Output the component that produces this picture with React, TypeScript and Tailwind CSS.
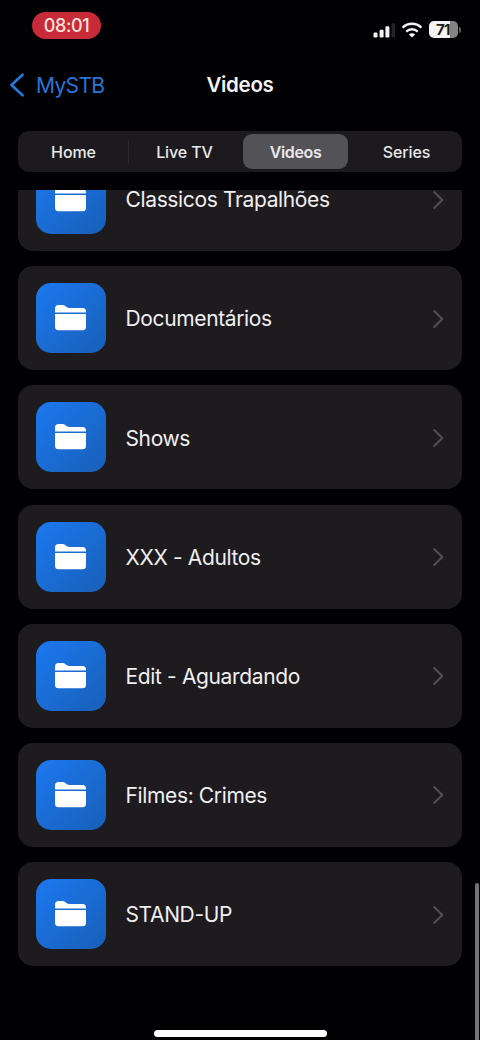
const tabs = ["Home", "Live TV", "Videos", "Series"]

const folders = [
    "Classicos Trapalhões",
    "Documentários",
    "Shows",
    "XXX - Adultos",
    "Edit - Aguardando",
    "Filmes: Crimes",
    "STAND-UP",
]

function StatusBar() {
    return (
        <div className="flex h-[50px] shrink-0 items-start justify-between pl-8 pr-[19px] pt-3">
            <div className="flex h-[27px] w-[69px] items-center justify-center rounded-full bg-[#c82a38] text-[18px] font-medium tracking-[-0.4px] text-[#fbe3dc]">
                08:01
            </div>
            <div className="flex items-center pt-[9px]">
                <svg width="23" height="16" viewBox="0 0 23 16" fill="#f4f4f4">
                    <rect x="0.5" y="10.5" width="4" height="5" rx="1.2" />
                    <rect x="6.6" y="7.7" width="4" height="7.8" rx="1.2" />
                    <rect x="12.4" y="4.3" width="4" height="11.2" rx="1.2" />
                    <rect x="18.4" y="1.3" width="3.6" height="14.2" rx="1.2" fill="#242426" />
                </svg>
                <svg className="ml-[5px]" width="22" height="16" viewBox="0 0 22 16" fill="none" stroke="#f4f4f4" strokeWidth="2.5">
                    <path d="M1.6 5.6C7 .6 15 .6 20.4 5.6" />
                    <path d="M5.2 9.6C8.6 6.6 13.4 6.6 16.8 9.6" />
                    <path d="M11 15.6L7.8 12.4C9.6 10.8 12.4 10.8 14.2 12.4Z" fill="#f4f4f4" stroke="none" />
                </svg>
                <div className="ml-[6px] flex h-[17px] w-[29px] items-center justify-center overflow-hidden rounded-[5px] bg-linear-to-r from-[#f4f4f4] from-71% to-[#838383] to-71% pr-px text-[15px] font-bold leading-none tracking-[-0.5px] text-[#1b1b1b]">
                    71
                </div>
                <div className="ml-px h-[6px] w-[2px] rounded-r-full bg-[#5c5c5c]" />
            </div>
        </div>
    )
}

function Header() {
    return (
        <div className="grid h-[70px] shrink-0 grid-cols-3 items-center">
            <div className="flex items-center pl-[9px] text-[#2675d9]">
                <svg width="16" height="24" viewBox="0 0 16 24" fill="none" stroke="currentColor" strokeWidth="2.8" strokeLinecap="round" strokeLinejoin="round">
                    <path d="M13.5 1.8L2.5 12L13.5 22.2" />
                </svg>
                <span className="ml-[11px] pt-px text-[21px] tracking-[-0.65px]">MySTB</span>
            </div>
            <h1 className="text-center text-[20.5px] font-semibold tracking-[-0.3px] text-[#f3f3f5]">Videos</h1>
        </div>
    )
}

function Tabs() {
    return (
        <div className="mx-[18px] mt-[11px] flex h-[41px] shrink-0 items-center rounded-[11px] bg-[#1c1a1e] py-[3px]">
            {tabs.map((tab, i) => (
                <div key={tab} className="flex h-full w-[111px] items-center">
                    <div className={`mx-[3px] flex h-full flex-1 items-center justify-center rounded-[9px] text-[16px] text-[#e9e8ea] ${tab === "Videos" ? "bg-[#535256] font-semibold tracking-[-0.35px]" : "font-medium tracking-[-0.1px]"}`}>
                        {tab}
                    </div>
                    {i === 0 ? <div className="-ml-px h-6 w-px bg-[#2c2a2e]" /> : undefined}
                </div>
            ))}
        </div>
    )
}

function FolderTile() {
    return (
        <div className="flex size-[70px] items-center justify-center rounded-[15px] bg-linear-to-br from-[#1c78f0] to-[#185fb8]">
            <svg width="31" height="26" viewBox="0 0 31 26" fill="#fff">
                <path d="M0 7.6V3.5Q0 0 3.5 0H7.2Q9 0 10.3 1.1L11.8 2.2Q12.9 3 14.6 3H27.5Q31 3 31 6.5V7.6Z" />
                <path d="M0 9H31V21.7Q31 25.2 27.5 25.2H3.5Q0 25.2 0 21.7Z" />
            </svg>
        </div>
    )
}

function FolderRow({ name }: { name: string }) {
    return (
        <div className="flex h-[104px] shrink-0 items-center rounded-[15px] bg-[#1e1b1f] pl-[17.5px] pr-[18px]">
            <FolderTile />
            <span className="ml-5 flex-1 pt-[2px] text-[21px] tracking-[-0.36px] text-[#f0eff1]">{name}</span>
            <svg className="mt-px" width="12" height="20" viewBox="0 0 12 20" fill="none" stroke="#514f53" strokeWidth="2" strokeLinecap="round" strokeLinejoin="round">
                <path d="M2.2 2L10.3 10L2.2 18" />
            </svg>
        </div>
    )
}

export default function App() {
    return (
        <div className="relative flex h-[1040px] w-[480px] flex-col overflow-hidden bg-[#010003] font-[Inter,sans-serif]">
            <StatusBar />
            <Header />
            <Tabs />
            <div className="mt-[18px] flex-1 overflow-hidden px-[18px]">
                <div className="-mt-[43px] flex flex-col gap-[15.2px]">
                    {folders.map((name) => (
                        <FolderRow key={name} name={name} />
                    ))}
                </div>
            </div>
            <div className="absolute right-[1px] top-[883px] h-[170px] w-1 rounded-full bg-[#77727a]" />
            <div className="absolute bottom-[3px] left-[154px] h-[7px] w-[173px] rounded-full bg-white" />
        </div>
    )
}
